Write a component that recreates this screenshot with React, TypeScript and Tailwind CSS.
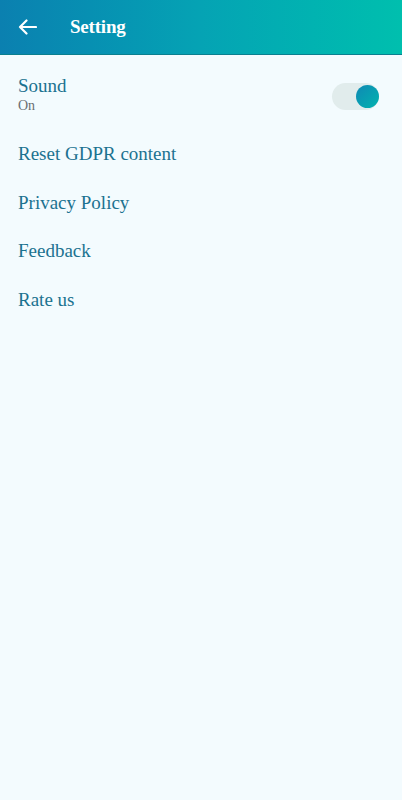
import React from "react";

export default function App() {
  const items = ["Reset GDPR content", "Privacy Policy", "Feedback", "Rate us"];
  return (
    <div
      className="w-[402px] h-[800px] bg-[#f3fbfe] flex flex-col"
      style={{ fontFamily: '"Liberation Serif", serif' }}
    >
      <div className="h-[55px] shrink-0 flex items-center bg-gradient-to-r from-[#0b80b0] via-[#05a3b4] to-[#00bfae] border-b border-[#0a7f8f]">
        <div className="w-[70px] pl-[18px] flex items-center">
          <svg width="19" height="16" viewBox="0 0 19 16" fill="none">
            <path d="M18 8H2M8.5 1.5L2 8l6.5 6.5" stroke="white" strokeWidth="2.2" strokeLinecap="round" strokeLinejoin="round" />
          </svg>
        </div>
        <div className="text-white text-[19px] font-semibold tracking-[-0.2px]">Setting</div>
      </div>
      <div className="flex items-start justify-between pl-[18px] pr-[23px] pt-[20px]">
        <div className="flex flex-col">
          <span className="text-[#1b7290] text-[19px] leading-[22px]">Sound</span>
          <span className="text-[#6a6f73] text-[14px] leading-[18px]">On</span>
        </div>
        <div className="relative w-[47px] h-[27px] mt-[8px] rounded-full bg-[#e1ecec]">
          <div className="absolute right-0 top-[2px] w-[23px] h-[23px] rounded-full bg-gradient-to-br from-[#1089b4] to-[#04b3ae]" />
        </div>
      </div>
      <div className="flex flex-col pl-[18px] mt-[15px]">
        {items.map((t) => (
          <div key={t} className="h-[48.5px] flex items-center text-[#1b7290] text-[19px]">
            {t}
          </div>
        ))}
      </div>
    </div>
  );
}
